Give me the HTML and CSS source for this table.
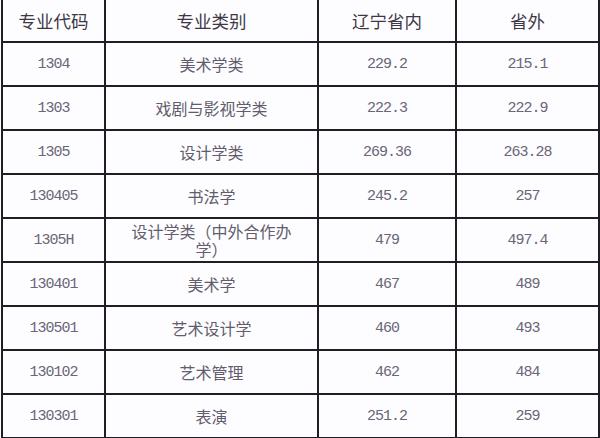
FILE: index.html
```html
<!DOCTYPE html>
<html lang="zh">
<head>
<meta charset="utf-8">
<link rel="stylesheet" href="styles.css">
</head>
<body>
<table class="score-table">
  <colgroup>
    <col class="c-code">
    <col class="c-cat">
    <col class="c-in">
    <col class="c-out">
  </colgroup>
  <thead>
    <tr>
      <th>专业代码</th>
      <th>专业类别</th>
      <th>辽宁省内</th>
      <th>省外</th>
    </tr>
  </thead>
  <tbody>
    <tr><td class="num">1304</td><td class="cat">美术学类</td><td class="num">229.2</td><td class="num">215.1</td></tr>
    <tr><td class="num">1303</td><td class="cat">戏剧与影视学类</td><td class="num">222.3</td><td class="num">222.9</td></tr>
    <tr><td class="num">1305</td><td class="cat">设计学类</td><td class="num">269.36</td><td class="num">263.28</td></tr>
    <tr><td class="num">130405</td><td class="cat">书法学</td><td class="num">245.2</td><td class="num">257</td></tr>
    <tr><td class="num">1305H</td><td class="cat two">设计学类（中外合作办学）</td><td class="num">479</td><td class="num">497.4</td></tr>
    <tr><td class="num">130401</td><td class="cat">美术学</td><td class="num">467</td><td class="num">489</td></tr>
    <tr><td class="num">130501</td><td class="cat">艺术设计学</td><td class="num">460</td><td class="num">493</td></tr>
    <tr><td class="num">130102</td><td class="cat">艺术管理</td><td class="num">462</td><td class="num">484</td></tr>
    <tr><td class="num">130301</td><td class="cat">表演</td><td class="num">251.2</td><td class="num">259</td></tr>
  </tbody>
</table>
</body>
</html>
```
FILE: styles.css
```css
html, body {
  margin: 0;
  padding: 0;
  background: #fdfdff;
}
body {
  width: 600px;
  height: 438px;
  overflow: hidden;
  font-family: "Noto Sans CJK SC", "Noto Sans", sans-serif;
}
.score-table {
  margin-left: 1px;
  width: 597px;
  table-layout: fixed;
  border-collapse: collapse;
  border: 2px solid #1f1e26;
  border-top: 0;
  background: #fdfdff;
}
.c-code { width: 103px; }
.c-cat { width: 213px; }
.c-in { width: 138px; }
.c-out { width: 143px; }
.score-table th,
.score-table td {
  border: 2px solid #1f1e26;
  text-align: center;
  vertical-align: middle;
  padding: 0;
}
.score-table th {
  border-top: 0;
  height: 41px;
  font-weight: normal;
  font-size: 17.5px;
  color: #3e3846;
}
.score-table td {
  height: 42px;
  color: #625c6d;
}
.score-table td.num {
  font-family: "Liberation Mono", "DejaVu Sans Mono", monospace;
  font-size: 15px;
  letter-spacing: -1px;
  color: #6b6577;
}
.score-table td.cat {
  font-size: 16px;
  padding: 0 20px;
  line-height: 18px;
}
```
